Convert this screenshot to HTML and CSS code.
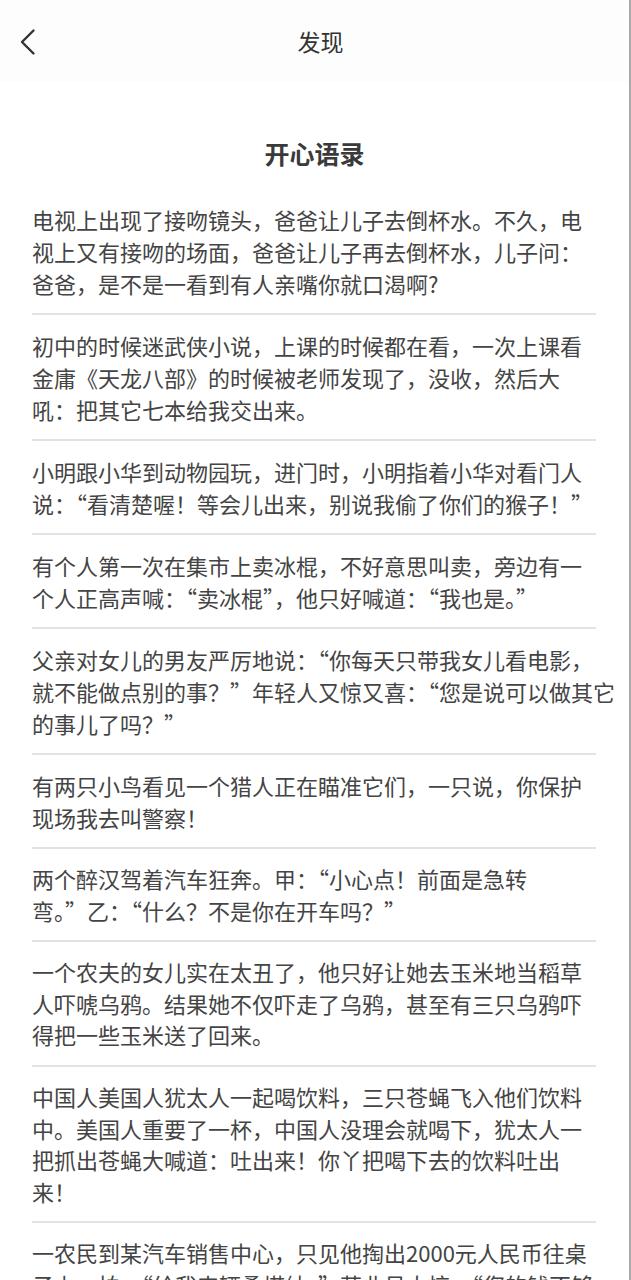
FILE: index.html
```html
<!DOCTYPE html>
<html lang="zh-CN">
<head>
<meta charset="utf-8">
<title>发现</title>
<link rel="stylesheet" href="styles.css">
</head>
<body>
<div class="page">
  <header class="topbar">
    <span class="back">
      <svg width="20" height="30" viewBox="0 0 20 30"><path d="M14.5 3.5 L3 15 L14.5 26.5" fill="none" stroke="#333" stroke-width="2.4" stroke-linecap="round" stroke-linejoin="round"/></svg>
    </span>
    <h1 class="topbar-title">发现</h1>
  </header>
  <h2 class="section-title">开心语录</h2>
  <ul class="jokes">
    <li class="joke">电视上出现了接吻镜头，爸爸让儿子去倒杯水。不久，电<br>视上又有接吻的场面，爸爸让儿子再去倒杯水，儿子问：<br>爸爸，是不是一看到有人亲嘴你就口渴啊?</li>
    <li class="joke">初中的时候迷武侠小说，上课的时候都在看，一次上课看<br>金庸《天龙八部》的时候被老师发现了，没收，然后大<br>吼：把其它七本给我交出来。</li>
    <li class="joke">小明跟小华到动物园玩，进门时，小明指着小华对看门人<br>说：“看清楚喔！等会儿出来，别说我偷了你们的猴子！”</li>
    <li class="joke">有个人第一次在集市上卖冰棍，不好意思叫卖，旁边有一<br>个人正高声喊：“卖冰棍”，他只好喊道：“我也是。”</li>
    <li class="joke">父亲对女儿的男友严厉地说：“你每天只带我女儿看电影，<br>就不能做点别的事？”年轻人又惊又喜：“您是说可以做其它<br>的事儿了吗？”</li>
    <li class="joke">有两只小鸟看见一个猎人正在瞄准它们，一只说，你保护<br>现场我去叫警察！</li>
    <li class="joke">两个醉汉驾着汽车狂奔。甲：“小心点！前面是急转<br>弯。”乙：“什么？不是你在开车吗？”</li>
    <li class="joke">一个农夫的女儿实在太丑了，他只好让她去玉米地当稻草<br>人吓唬乌鸦。结果她不仅吓走了乌鸦，甚至有三只乌鸦吓<br>得把一些玉米送了回来。</li>
    <li class="joke">中国人美国人犹太人一起喝饮料，三只苍蝇飞入他们饮料<br>中。美国人重要了一杯，中国人没理会就喝下，犹太人一<br>把抓出苍蝇大喊道：吐出来！你丫把喝下去的饮料吐出<br>来！</li>
    <li class="joke">一农民到某汽车销售中心，只见他掏出2000元人民币往桌<br>子上一拍：“给我来辆桑塔纳。”营业员大惊：“您的钱不够<br>啊！”农民说：“我知道，这是定金。”</li>
  </ul>
</div>
</body>
</html>
```

FILE: styles.css
```css
html, body {
  margin: 0;
  padding: 0;
  background: #ffffff;
}

body {
  font-family: "Noto Sans CJK SC", "Noto Sans", sans-serif;
  color: #444444;
}

.page {
  width: 631px;
  min-height: 1280px;
  box-sizing: border-box;
  border-right: 2px solid #a9a9a9;
  overflow: hidden;
}

.topbar {
  height: 82px;
  background: #fdfdfd;
  display: flex;
  align-items: center;
  justify-content: center;
  position: relative;
}

.back {
  position: absolute;
  left: 19px;
  top: 27px;
  width: 20px;
  height: 30px;
  display: block;
}

.back svg {
  display: block;
}

.topbar-title {
  margin: 0;
  padding-left: 12px;
  font-size: 23px;
  font-weight: 400;
  color: #333333;
  line-height: 30px;
}

.section-title {
  margin: 0;
  padding-top: 54px;
  font-size: 25px;
  font-weight: 700;
  line-height: 34px;
  text-align: center;
  color: #3a3a3a;
}

.jokes {
  list-style: none;
  margin: 19px 33px 0 32px;
  padding: 0;
}

.joke {
  font-size: 22px;
  line-height: 32px;
  padding: 14px 0;
  border-bottom: 2px solid #e2e2e2;
  white-space: nowrap;
}

.joke:nth-child(n+7) {
  line-height: 31.6px;
}
```
